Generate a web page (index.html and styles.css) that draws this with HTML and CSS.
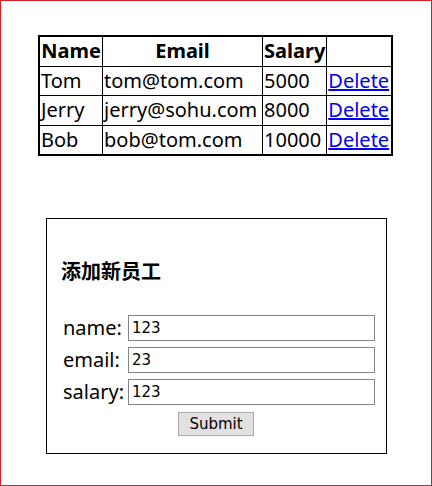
FILE: index.html
```html
<!DOCTYPE html>
<html lang="en">
<head>
  <meta charset="UTF-8" />
  <title>Employees</title>
  <link rel="stylesheet" href="styles.css">
</head>
<body>
  <div class="frame">
    <table class="staff">
      <tr><th class="c-name">Name</th><th class="c-email">Email</th><th class="c-salary">Salary</th><th class="c-op"></th></tr>
      <tr><td>Tom</td><td>tom@tom.com</td><td>5000</td><td><a href="#">Delete</a></td></tr>
      <tr><td>Jerry</td><td>jerry@sohu.com</td><td>8000</td><td><a href="#">Delete</a></td></tr>
      <tr><td>Bob</td><td>bob@tom.com</td><td>10000</td><td><a href="#">Delete</a></td></tr>
    </table>

    <div class="addBox">
      <h3>添加新员工</h3>
      <form class="addForm">
        <label for="fName">name:</label><input id="fName" type="text" value="123">
        <label for="fEmail">email:</label><input id="fEmail" type="text" value="23">
        <label for="fSalary">salary:</label><input id="fSalary" type="text" value="123">
        <div class="actions"><button type="button">Submit</button></div>
      </form>
    </div>
  </div>
</body>
</html>
```

FILE: styles.css
```css
html, body {
  margin: 0;
  background: #fff;
}
.frame {
  box-sizing: border-box;
  height: 486px;
  border: 1px solid #d42020;
  padding-top: 34px;
  font-family: 'Noto Sans', 'Noto Sans CJK SC', sans-serif;
  color: #000;
}
.staff {
  margin-left: 37px;
  border-collapse: collapse;
  border: 2px solid #000;
  font-size: 20px;
}
.staff th, .staff td {
  border: 1px solid #000;
  height: 28.5px;
  padding: 0 1px;
  line-height: 28px;
  text-align: left;
  white-space: nowrap;
}
.staff th { text-align: center; }
.c-name { width: 60px; }
.c-email { width: 157px; }
.c-salary { width: 60px; }
.c-op { width: 62px; }
.staff a { color: #0000ee; }

.addBox {
  box-sizing: border-box;
  width: 341px;
  height: 236px;
  margin: 62px 0 0 45px;
  border: 1px solid #000;
  padding: 39px 10px 0 14px;
}
.addBox h3 {
  margin: 0 0 29px;
  font-size: 20px;
  font-weight: bold;
  line-height: 28px;
}
.addForm {
  display: grid;
  grid-template-columns: 65px 247px;
  row-gap: 6px;
  padding-left: 2px;
}
.addForm label {
  font-size: 20px;
  line-height: 26px;
}
.addForm input {
  box-sizing: border-box;
  height: 26px;
  margin: 0;
  border: 1px solid #858585;
  padding: 0 3px;
  font-family: 'DejaVu Sans', sans-serif;
  font-size: 15px;
}
.actions {
  grid-column: 1 / 3;
  text-align: center;
  margin-top: 1px;
  margin-left: -6px;
}
.actions button {
  width: 76px;
  height: 24px;
  background: #e1e1e1;
  border: 1px solid #adadad;
  font-family: 'DejaVu Sans', sans-serif;
  font-size: 15px;
  padding: 0;
}
```
